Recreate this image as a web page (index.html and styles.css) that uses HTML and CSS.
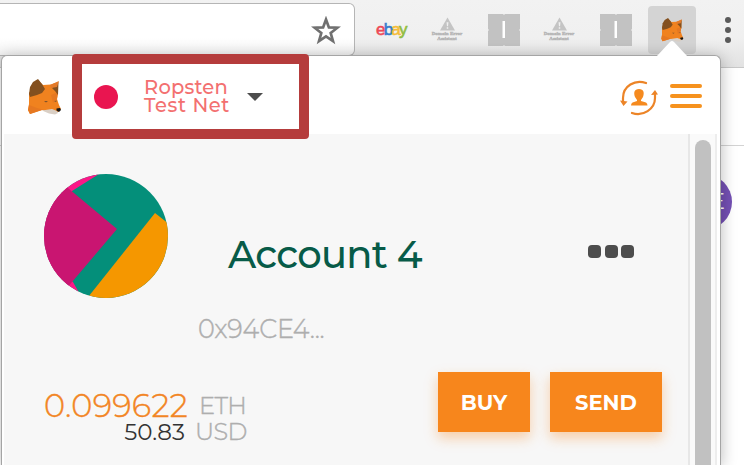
FILE: index.html
```html
<!DOCTYPE html>
<html lang="en">
<head>
  <meta charset="UTF-8">
  <title>MetaMask</title>
  <link rel="stylesheet" href="styles.css">
</head>
<body>

<svg class="sprite" aria-hidden="true">
  <symbol id="fox" viewBox="0 0 34 36">
    <path fill="#f0821f" d="M11 1 16 6 24 5.5 31 3 31 14 30 20 32 26 34 30 31 33 25 34 15 31 9 33 3 35 1 31 2 25 2 14Z"/>
    <path fill="#e67821" d="M2 26 10 29 17 31 15 31 3 35 1 31ZM24 16 31 13 30 20 26 24Z"/>
    <path fill="#83501f" d="M11 0 15 5 18 10 15 14 10 16 3 18 2 15 3 8 6 3Z"/>
    <path fill="#83501f" d="M31.5 3 31 16 28 12 25 9Z"/>
    <path fill="#e37a29" d="M32 2 30 8 24 9 23 6Z"/>
    <path fill="#7c512b" d="M17 22 21 22 19 23.5ZM27 22 30 21.5 29 23Z"/>
    <path fill="#d9cfc5" d="M15 31.5 25 30 30 32 31 34 28 35.5 22 34.5Z"/>
    <path fill="#171717" d="M29.5 29.5 33 29 34 31 32 33 29.5 31.5Z"/>
  </symbol>
  <symbol id="block" viewBox="0 0 32 32">
    <path fill="#c2c2c2" d="M0 0H15L16 1 17 0H32V15L31 16 32 17V32H17L16 31 15 32H0V17L1 16 0 15Z"/>
    <path fill="#fff" d="M14.5 7H17V24H14.5Z"/>
  </symbol>
  <symbol id="warning" viewBox="0 0 16 14">
    <path fill="#c4c4c4" d="M8 0 16 14H0Z"/>
    <path fill="#f0f0f0" d="M7 5H9L8.6 9.5H7.4ZM7.2 10.5H8.8V12H7.2Z"/>
  </symbol>
</svg>

<div class="toolbar">
  <div class="address-bar">
    <svg class="star" viewBox="0 0 30 30"><path d="M15 3.5 17.9 11.4 26.4 11.7 19.7 17 22 25.2 15 20.5 8 25.2 10.3 17 3.6 11.7 12.1 11.4Z"/></svg>
  </div>
  <div class="extensions">
    <div class="ext ebay"><span class="e">e</span><span class="b">b</span><span class="a">a</span><span class="y">y</span></div>
    <div class="ext assistant"><svg><use href="#warning"/></svg><span>Domain Error<br>Assistant</span></div>
    <svg class="ext block"><use href="#block"/></svg>
    <div class="ext assistant"><svg><use href="#warning"/></svg><span>Domain Error<br>Assistant</span></div>
    <svg class="ext block"><use href="#block"/></svg>
    <div class="ext active"><svg><use href="#fox"/></svg></div>
    <div class="menu-dots"><i></i><i></i><i></i></div>
  </div>
</div>

<div class="page">
  <div class="page-bar"></div>
  <div class="profile">E</div>
</div>

<div class="popup">
  <svg class="pointer" viewBox="0 0 32 17"><path d="M0 17 14 2Q16 0 18 2L32 17Z"/></svg>
  <div class="header">
    <svg class="logo"><use href="#fox"/></svg>
    <div class="network">
      <span class="network-dot"></span>
      <span class="network-name"><span>Ropsten</span><span class="net-line">Test Net</span></span>
      <span class="caret"></span>
    </div>
    <svg class="switch" viewBox="0 0 38 36">
      <g fill="none" stroke="#ec8427" stroke-width="2.2" stroke-linecap="round">
        <path d="M26 3C15-1 3 6 3 18V22"/>
        <path d="M12 33C23 37 35 29 35 18V13"/>
      </g>
      <path fill="#ec8427" d="M0 20.5 7.5 21.5 3.5 26ZM31 15 35 10 38 14.5Z"/>
      <path fill="#f58a1f" d="M19 9C24 9 24.5 13 23 17L21 20V21L26 22.5Q27.5 23.5 27.5 25.5H11Q11 23.5 12.5 22.5L17 21V20L15 17C13.5 13 14 9 19 9Z"/>
    </svg>
    <div class="hamburger"><i></i><i></i><i></i></div>
  </div>

  <div class="content">
    <div class="account">
      <div class="identity">
        <svg class="identicon" viewBox="0 0 124 124">
          <clipPath id="round"><circle cx="62" cy="62" r="62"/></clipPath>
          <g clip-path="url(#round)">
            <path fill="#048f7a" d="M0 0H124V124H0Z"/>
            <path fill="#fb1887" d="M0 0H55L28 17 20 100 29 108 38 124H0Z"/>
            <path fill="#c91571" d="M0 -6 73 55 0 141Z"/>
            <path fill="#f59700" d="M111 39 33 137H130V54Z"/>
          </g>
        </svg>
        <h1>Account 4</h1>
        <div class="more"><i></i><i></i><i></i></div>
      </div>
      <div class="address">0x94CE4...</div>
      <div class="funds">
        <div class="balance">
          <span class="eth">0.099622</span><span class="unit">ETH</span>
          <span class="usd">50.83</span><span class="unit usd-unit">USD</span>
        </div>
        <div class="actions">
          <button class="buy">BUY</button>
          <button class="send">SEND</button>
        </div>
      </div>
    </div>
    <div class="scrollbar"><div class="thumb"></div></div>
  </div>
</div>

</body>
</html>
```

FILE: styles.css
```css
* {
  box-sizing: border-box;
}
body {
  margin: 0;
  height: 465px;
  overflow: hidden;
  position: relative;
  background: #fff;
  font-family: Montserrat, Inter, sans-serif;
}
.sprite {
  display: none;
}
.toolbar {
  display: flex;
  height: 68px;
  padding-top: 3px;
  background: linear-gradient(#f2f2f2, #f0f0f0 55%, #e2e2e2);
  border-bottom: 1px solid #c8c8c8;
}
.address-bar {
  display: flex;
  justify-content: flex-end;
  width: 355px;
  height: 53px;
  padding: 12px 13px 0 0;
  background: linear-gradient(#fff 65%, #f5f5f5);
  border: 1px solid #b5b5b5;
  border-left: 0;
  border-radius: 0 6px 6px 0;
}
.star {
  width: 30px;
  height: 30px;
  fill: none;
  stroke: #707070;
  stroke-width: 2.7;
}
.extensions {
  display: flex;
  align-items: center;
  height: 54px;
  padding-left: 20px;
}
.ext {
  flex: none;
}
.ebay {
  width: 34px;
  padding-left: 1px;
  font: 17px/24px "Liberation Sans", Arial, sans-serif;
  letter-spacing: -1.8px;
  -webkit-text-stroke: 0.6px;
}
.e {
  color: #ee4856;
}
.b {
  color: #397dcc;
}
.a {
  color: #f6bd39;
}
.y {
  color: #92bd3f;
}
.assistant {
  display: flex;
  flex-direction: column;
  align-items: center;
  width: 32px;
  margin-left: 22px;
  color: #b4b4b4;
  font: bold 5px/5.3px "Liberation Serif", serif;
  -webkit-text-stroke: 0.4px;
  text-align: center;
  white-space: nowrap;
}
.assistant svg {
  width: 15px;
  height: 14px;
  margin-top: -2px;
}
.block {
  width: 32px;
  height: 32px;
  margin-left: 25px;
}
.block + .assistant {
  margin-left: 23px;
}
.active {
  display: flex;
  justify-content: center;
  width: 48px;
  height: 48px;
  margin-left: 16px;
  padding-top: 12px;
  background: #d4d4d4;
  border-radius: 4px;
}
.active svg {
  width: 24px;
  height: 24px;
}
.menu-dots {
  display: flex;
  flex-direction: column;
  gap: 4px;
  margin-left: 29px;
}
.menu-dots i {
  width: 6px;
  height: 6px;
  background: #5a5a5a;
  border-radius: 50%;
}
.page-bar {
  height: 78px;
  border-bottom: 1px solid #d3d3d3;
}
.profile {
  position: absolute;
  left: 676px;
  top: 174px;
  width: 56px;
  height: 56px;
  padding-right: 7px;
  color: #fff;
  background: #7450b4;
  border-radius: 50%;
  font-size: 22px;
  line-height: 56px;
  text-align: right;
}
.popup {
  position: absolute;
  left: 1px;
  top: 55px;
  width: 720px;
  height: 410px;
  background: #fff;
  border: 1px solid #a5a5a5;
  border-bottom: 0;
  border-radius: 6px 6px 0 0;
  box-shadow: 0 2px 16px rgba(0,0,0,0.28);
}
.pointer {
  position: absolute;
  left: 654px;
  top: -16px;
  width: 32px;
  height: 17px;
  fill: #fff;
}
.header {
  display: flex;
  align-items: center;
  height: 78px;
  padding-left: 25px;
}
.logo {
  width: 34px;
  height: 36px;
  margin-top: 3px;
}
.network {
  display: flex;
  align-items: center;
  position: relative;
  z-index: 1;
  width: 237px;
  height: 85px;
  margin: 3px 0 0 11px;
  padding-left: 12px;
  background: #fff;
  border: 10px solid #b53c3c;
  border-radius: 4px;
}
.network-dot {
  width: 24px;
  height: 24px;
  background: #e91550;
  border-radius: 50%;
}
.network-name {
  display: flex;
  flex-direction: column;
  width: 90px;
  margin: -1px 0 0 26px;
  color: #f37070;
  font-size: 19.5px;
  font-weight: 500;
  line-height: 18px;
  letter-spacing: 0.2px;
  white-space: nowrap;
}
.net-line {
  letter-spacing: 0.6px;
}
.caret {
  margin-left: 13px;
  border: 8px solid transparent;
  border-top-color: #4d4d4d;
  border-bottom: 0;
}
.switch {
  width: 38px;
  height: 36px;
  margin: 5px 0 0 311px;
}
.hamburger {
  display: flex;
  flex-direction: column;
  gap: 6px;
  width: 32px;
  margin: 2px 0 0 12px;
}
.hamburger i {
  height: 4px;
  background: #f6921e;
  border-radius: 2px;
}
.content {
  display: flex;
  height: 331px;
  padding: 0 3px 0 2px;
}
.account {
  width: 684px;
  padding: 40px 0 0 40px;
  background: #f7f7f7;
}
.identity {
  display: flex;
  height: 124px;
}
.identicon {
  width: 124px;
  height: 124px;
}
h1 {
  width: 200px;
  margin: 57px 0 0 60px;
  color: #075b48;
  font-size: 38.5px;
  font-weight: 500;
  line-height: 48px;
  letter-spacing: -0.7px;
  white-space: nowrap;
}
.more {
  display: flex;
  gap: 3.5px;
  margin: 71px 0 0 160px;
}
.more i {
  width: 13px;
  height: 13px;
  background: #4d4d4d;
  border-radius: 4px;
}
.address {
  margin: 15px 0 0 154px;
  color: #aeaeae;
  font-size: 25.5px;
  font-weight: 300;
  line-height: 32px;
  letter-spacing: -0.2px;
  -webkit-text-stroke: 0.4px;
}
.funds {
  display: flex;
  margin-top: 27px;
}
.balance {
  display: grid;
  grid-template-columns: 145px 60px;
  grid-template-rows: 26px 26px;
  align-content: start;
  column-gap: 10px;
  padding-top: 21px;
  line-height: 26px;
  white-space: nowrap;
}
.eth {
  color: #f28524;
  font-size: 32px;
  font-weight: 300;
  letter-spacing: 0.3px;
  -webkit-text-stroke: 0.4px;
}
.unit {
  color: #aeaeae;
  font-size: 24px;
  font-weight: 300;
  letter-spacing: -0.6px;
  -webkit-text-stroke: 0.4px;
}
.usd {
  padding-right: 4px;
  color: #333;
  font-size: 23px;
  font-weight: 400;
  text-align: right;
}
.usd-unit {
  margin-left: -4px;
}
.actions {
  display: flex;
  gap: 20px;
  margin-left: 179px;
}
button {
  height: 60px;
  padding: 0;
  color: #fff;
  background: #f7861c;
  border: 0;
  box-shadow: 0 6px 12px rgba(247,134,28,0.36);
  font-family: inherit;
  font-size: 21px;
  font-weight: 700;
}
.buy {
  width: 92px;
}
.send {
  width: 112px;
}
.scrollbar {
  width: 29px;
  padding: 6px 0 0 5px;
  background: #fafafa;
  border-left: 2px solid #e7e7e7;
  border-right: 2px solid #ededed;
}
.thumb {
  width: 16px;
  height: 100%;
  background: #c1c1c1;
  border-radius: 8px 8px 0 0;
}
```
